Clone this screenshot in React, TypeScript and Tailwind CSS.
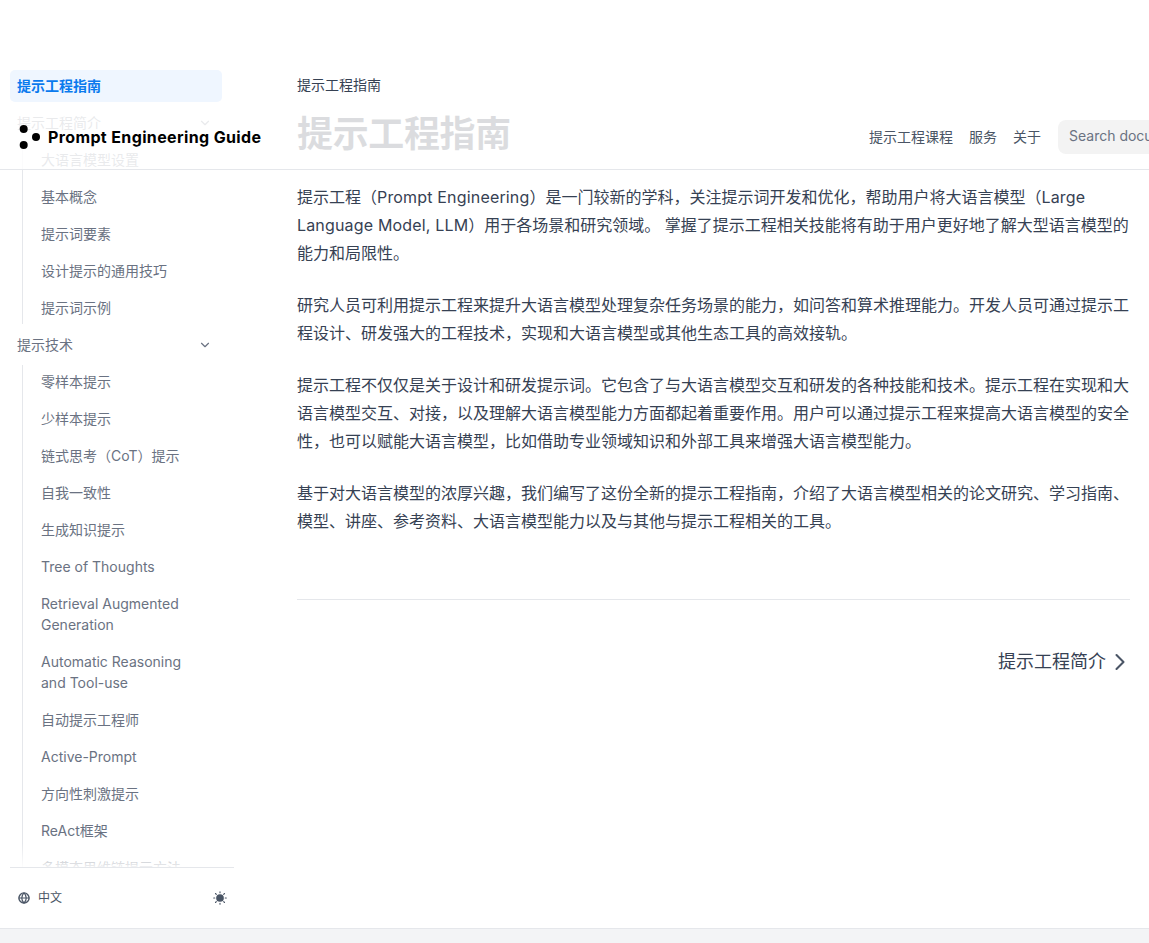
import { ChevronDown, ChevronRight } from "lucide-react";
import type { ReactNode } from "react";

const FONT = "font-['Inter','Noto_Sans_CJK_SC',sans-serif]";

type NavItem = { label: string };

const INTRO: NavItem[] = [
  { label: "大语言模型设置" },
  { label: "基本概念" },
  { label: "提示词要素" },
  { label: "设计提示的通用技巧" },
  { label: "提示词示例" },
];

const TECHNIQUES: NavItem[] = [
  { label: "零样本提示" },
  { label: "少样本提示" },
  { label: "链式思考（CoT）提示" },
  { label: "自我一致性" },
  { label: "生成知识提示" },
  { label: "Tree of Thoughts" },
  { label: "Retrieval Augmented Generation" },
  { label: "Automatic Reasoning and Tool-use" },
  { label: "自动提示工程师" },
  { label: "Active-Prompt" },
  { label: "方向性刺激提示" },
  { label: "ReAct框架" },
  { label: "多模态思维链提示方法" },
];

const PARAGRAPHS: ReactNode[] = [
  <>
    提示工程（<span className="tracking-[0.17px]">Prompt Engineering</span>）是一门较新的学科，关注提示词开发和优化，帮助用户将大语言模型（
    <span className="tracking-[0.17px]">Large Language Model, LLM</span>）用于各场景和研究领域。 掌握了提示工程相关技能将有助于用户更好地了解大型语言模型的能力和局限性。
  </>,
  "研究人员可利用提示工程来提升大语言模型处理复杂任务场景的能力，如问答和算术推理能力。开发人员可通过提示工程设计、研发强大的工程技术，实现和大语言模型或其他生态工具的高效接轨。",
  "提示工程不仅仅是关于设计和研发提示词。它包含了与大语言模型交互和研发的各种技能和技术。提示工程在实现和大语言模型交互、对接，以及理解大语言模型能力方面都起着重要作用。用户可以通过提示工程来提高大语言模型的安全性，也可以赋能大语言模型，比如借助专业领域知识和外部工具来增强大语言模型能力。",
  "基于对大语言模型的浓厚兴趣，我们编写了这份全新的提示工程指南，介绍了大语言模型相关的论文研究、学习指南、模型、讲座、参考资料、大语言模型能力以及与其他与提示工程相关的工具。",
];

function SubList({ items }: { items: NavItem[] }) {
  return (
    <ul className="ml-[12px] flex flex-col gap-[4px] border-l border-gray-200 pl-[8px]">
      {items.map((item) => (
        <li key={item.label} className="py-[6px] pl-[10px] pr-[16px] text-sm leading-[21px] text-gray-500">
          {item.label}
        </li>
      ))}
    </ul>
  );
}

function SectionTitle({ label }: { label: string }) {
  return (
    <div className="flex items-center justify-between py-[6px] pl-[7px] pr-[8px] text-sm leading-[21px] text-gray-500">
      {label}
      <ChevronDown className="mr-[2px] h-[14px] w-[14px]" />
    </div>
  );
}

function Sun() {
  return (
    <svg viewBox="0 0 20 20" className="h-[14px] w-[14px] text-gray-600" fill="currentColor">
      <circle cx="10" cy="10" r="5.5" />
      <path
        d="M10 1v1.5M10 17.5V19M1 10h1.5M17.5 10H19M3.6 3.6l1.1 1.1M15.3 15.3l1.1 1.1M3.6 16.4l1.1-1.1M15.3 4.7l1.1-1.1"
        stroke="currentColor"
        strokeWidth="1.6"
        strokeLinecap="round"
      />
    </svg>
  );
}

function Globe() {
  return (
    <svg viewBox="0 0 20 20" className="h-[12px] w-[12px] text-gray-600" fill="none" stroke="currentColor">
      <circle cx="10" cy="10" r="8.5" strokeWidth="2.4" />
      <path d="M1.5 10h17M10 1.5c-5 5-5 12 0 17M10 1.5c5 5 5 12 0 17" strokeWidth="2" />
    </svg>
  );
}

export default function App() {
  return (
    <div className={`relative flex h-[943px] w-[1149px] flex-col overflow-hidden bg-white ${FONT}`}>
      <div className="flex min-h-0 flex-1 pt-[70px]">
        <aside className="flex w-[245px] shrink-0 flex-col pl-[10px] pr-[11px]">
          <div className="relative min-h-0 flex-1 overflow-hidden">
            <div className="w-[212px]">
              <div className="rounded-[5px] bg-[#eff6ff] px-[7px] py-[5px] text-sm font-bold leading-[22px] text-[#0a7aee]">
                提示工程指南
              </div>
              <div className="mt-[4px] flex flex-col gap-[4px]">
                <SectionTitle label="提示工程简介" />
                <SubList items={INTRO} />
                <SectionTitle label="提示技术" />
                <SubList items={TECHNIQUES} />
              </div>
            </div>
            <div className="absolute inset-x-0 bottom-0 h-[24px] bg-gradient-to-b from-white/0 to-white/90" />
          </div>
          <div className="flex h-[61px] shrink-0 items-center justify-between border-t border-gray-200 pl-[8px] pr-[7px]">
            <div className="flex items-center gap-[8px] text-xs text-gray-600">
              <Globe />
              中文
            </div>
            <Sun />
          </div>
        </aside>

        <main className="min-w-0 flex-1 pl-[52px] pr-[19px] text-gray-700">
          <div className="pt-[5px] text-sm leading-[20px] text-gray-700">提示工程指南</div>
          <h1 className="mt-[17px] text-4xl font-bold leading-[44px] tracking-[-0.36px] text-gray-900">提示工程指南</h1>
          <div className="mt-[27px] flex flex-col gap-[24px]">
            {PARAGRAPHS.map((p, i) => (
              <p key={i} className="text-base leading-[28px]">
                {p}
              </p>
            ))}
          </div>
          <hr className="mt-[64px] border-gray-200" />
          <div className="mt-[48px] flex items-center justify-end text-lg leading-[28px] text-gray-700">
            提示工程简介
            <ChevronRight className="-mr-[4px] h-[28px] w-[28px] text-gray-600" strokeWidth={1.8} />
          </div>
        </main>
      </div>

      <div className="h-[15px] shrink-0 border-t border-gray-200 bg-[#f3f4f6]" />

      <header className="absolute left-0 top-[105px] flex h-[65px] w-[1300px] items-center border-b border-gray-200 bg-white/85 pl-[18px]">
        <svg viewBox="0 0 22 28" className="h-[28px] w-[22px] shrink-0 text-black" fill="currentColor">
          <circle cx="5.7" cy="6" r="4" />
          <circle cx="18" cy="14" r="4" />
          <circle cx="5.7" cy="22" r="4" />
        </svg>
        <span className="ml-[8px] text-base font-bold tracking-[0.37px] text-black">Prompt Engineering Guide</span>
        <nav className="absolute left-[869px] top-0 flex h-full items-center gap-[16px] text-sm text-gray-600">
          <span>提示工程课程</span>
          <span>服务</span>
          <span>关于</span>
          <div className="ml-[1px] flex h-[34px] w-[240px] items-center rounded-lg bg-[#f3f3f3] px-[11px] pb-[2px] text-sm text-gray-500">
            Search documentation...
          </div>
        </nav>
      </header>
    </div>
  );
}
